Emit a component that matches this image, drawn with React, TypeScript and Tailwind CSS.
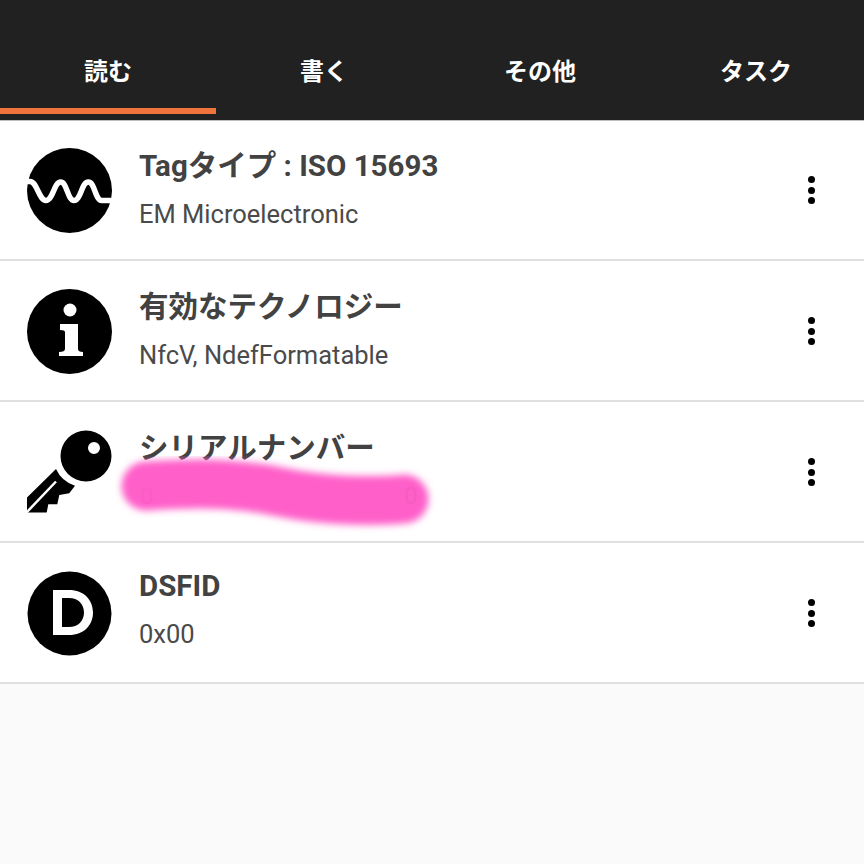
import React from 'react';

const FONT = 'font-["Roboto","Noto_Sans_CJK_JP",sans-serif]';

const tabs = ['読む', '書く', 'その他', 'タスク'];

const WaveIcon = () => (
  <svg viewBox="0 0 85 85" className="w-[85px] h-[85px] shrink-0">
    <circle cx="42.5" cy="42.5" r="42.5" fill="#000" />
    <path
      d="M0 33.5 H3 C10 33.5 12 52.5 19 52.5 C26 52.5 27 34 33.7 34 C40 34 40.5 52.5 47 52.5 C54 52.5 54.5 34 61.3 34 C68 34 68 52.5 74.7 52.5 H85"
      fill="none"
      stroke="#fff"
      strokeWidth="5.5"
    />
  </svg>
);

const InfoIcon = () => (
  <svg viewBox="0 0 85 85" className="w-[85px] h-[85px] shrink-0">
    <circle cx="42.5" cy="42.5" r="42.5" fill="#000" />
    <circle cx="43" cy="21" r="6.5" fill="#fff" />
    <path d="M33 35 H51 V60 Q51 63 56 63 V67 H32 V63 Q38 63 38 60 V43 Q38 41 33 41 Z" fill="#fff" />
  </svg>
);

const KeyIcon = () => (
  <svg viewBox="0 -1 85 85" className="w-[85px] h-[85px] shrink-0">
    <path
      fillRule="evenodd"
      fill="#000"
      d="M59 -0.5 A25.5 25.5 0 1 1 59 50.5 A25.5 25.5 0 1 1 59 -0.5 Z M67 11 A6 6 0 1 0 67 23 A6 6 0 1 0 67 11 Z"
    />
    <path fill="#000" d="M0 66.5 L29 38 A31 31 0 0 0 48 54.7 L42.3 62.3 L32.3 64 L30.3 73.3 L21.3 73.3 L19.7 81.5 L0 81.5 Z" />
    <path d="M-1 82 L29 50.5" fill="none" stroke="#fff" strokeWidth="2.5" />
  </svg>
);

const DIcon = () => (
  <svg viewBox="0 0 85 85" className="w-[85px] h-[85px] shrink-0">
    <circle cx="42.5" cy="42.5" r="42" fill="#000" />
    <path
      fillRule="evenodd"
      fill="#fff"
      d="M26 19 H42 C57 19 66 29 66 41.5 C66 54 57 64 42 64 H26 Z M35 27 V56 H42 C51 56 57 50 57 41.5 C57 33 51 27 42 27 Z"
    />
  </svg>
);

const MoreDots = () => (
  <div className="flex flex-col gap-[3.5px] shrink-0">
    <div className="w-[7px] h-[7px] rounded-full bg-black" />
    <div className="w-[7px] h-[7px] rounded-full bg-black" />
    <div className="w-[7px] h-[7px] rounded-full bg-black" />
  </div>
);

const rows = [
  { icon: <WaveIcon />, title: 'Tagタイプ : ISO 15693', sub: 'EM Microelectronic', height: 'h-[140px]', offset: '-mt-[4px]' },
  { icon: <InfoIcon />, title: '有効なテクノロジー', sub: 'NfcV, NdefFormatable', height: 'h-[141px] pt-[1px]', offset: '-mt-[4px]' },
  { icon: <KeyIcon />, title: 'シリアルナンバー', sub: '', height: 'h-[141px] pt-[1px]', offset: '-mt-[4px]', hidden: true },
  { icon: <DIcon />, title: 'DSFID', sub: '0x00', height: 'h-[141px] pt-[1px]', offset: '-mt-[10px]' },
];

export default function App() {
  return (
    <div className={`w-[864px] h-[864px] bg-[#fafafa] overflow-hidden ${FONT}`}>
      <div className="h-[121px] bg-[#212121] pt-[50px] border-b border-[#bdbdbd]">
        <div className="flex">
          {tabs.map((t, i) => (
            <div
              key={t}
              className={`w-[216px] h-[54px] flex justify-center pt-[4px] text-[24px] leading-[36px] font-bold text-white border-b-[6px] box-content ${
                i === 0 ? 'border-[#f0733c]' : 'border-transparent'
              }`}
            >
              {t}
            </div>
          ))}
        </div>
      </div>

      {rows.map(r => (
        <div key={r.title} className={`relative ${r.height} bg-white border-b-[2px] border-[#e0e0e0] flex items-center pl-[27px] pr-[49px]`}>
          {r.icon}
          <div className={`flex-1 ml-[27px] ${r.offset}`}>
            <div className="text-[29.5px] leading-[40px] font-bold text-[#424242]">{r.title}</div>
            <div className="text-[25.5px] leading-[34px] mt-[11px] h-[34px] text-[#4a4a4a]">{r.sub}</div>
          </div>
          <MoreDots />
          {r.hidden && (
            <svg viewBox="0 0 320 80" className="absolute left-[115px] top-[54px] w-[320px] h-[80px]">
              <defs>
                <filter id="soft" filterUnits="userSpaceOnUse" x="0" y="0" width="320" height="80">
                  <feGaussianBlur stdDeviation="3.5" />
                </filter>
              </defs>
              <path
                d="M31 30 C90 26 130 28 170 37 C210 45 260 46 289 43"
                fill="none"
                stroke="#ff5fc9"
                strokeWidth="49"
                strokeLinecap="round"
                filter="url(#soft)"
              />
              <text x="25" y="48" fontSize="24" fill="#fb5dc6">0</text>
              <text x="289" y="48" fontSize="24" fill="#f65cc2">0</text>
            </svg>
          )}
        </div>
      ))}
    </div>
  );
}
